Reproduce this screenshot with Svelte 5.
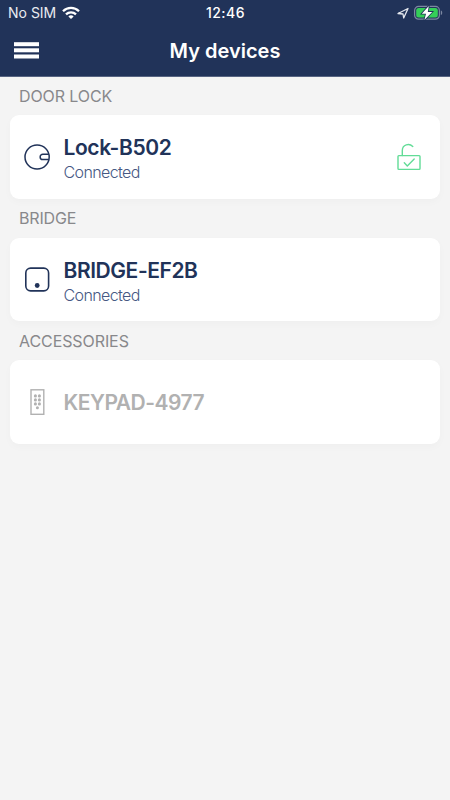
<script>
  const sections = [
    { label: 'DOOR LOCK', labelSpacing: -0.1, name: 'Lock-B502', nameSpacing: -0.4, status: 'Connected', icon: 'lock', unlocked: true },
    { label: 'BRIDGE', labelSpacing: -0.15, name: 'BRIDGE-EF2B', nameSpacing: -0.43, status: 'Connected', icon: 'bridge' },
    { label: 'ACCESSORIES', labelSpacing: -0.08, name: 'KEYPAD-4977', nameSpacing: -0.5, icon: 'keypad', disabled: true }
  ];
  const keys = [0, 1, 2].flatMap((row) => [0, 1].map((col) => [col, row]));
</script>

<div class="screen">
  <header>
    <div class="status-bar">
      <div class="carrier">
        <span>No SIM</span>
        <svg width="18" height="14" viewBox="0 0 18 14" fill="none" stroke="#fff" stroke-width="2.3">
          <path d="M1 5.2C5.5.8 12.5.8 17 5.2" />
          <path d="M4 8.3C6.8 5.6 11.2 5.6 14 8.3" />
          <path d="M6.4 10.4C7.8 9 10.2 9 11.6 10.4L9 13Z" fill="#fff" stroke="none" />
        </svg>
      </div>
      <time>12:46</time>
      <div class="power">
        <svg class="location" width="12" height="12" viewBox="0 0 12 12" fill="none" stroke="#e4e7ee" stroke-width="1.3" stroke-linejoin="round">
          <path d="M1 6.5L11 1.5L6.7 11L6 7Z" />
        </svg>
        <svg width="29" height="16" viewBox="0 0 29 16">
          <rect x=".6" y="1.4" width="24.8" height="12.8" rx="4" fill="none" stroke="#7d88a1" stroke-width="1.2" />
          <path d="M26.8 5.5C28.7 6.1 28.7 9.4 26.8 10Z" fill="#7d88a1" />
          <rect x="2.2" y="3" width="21.6" height="9.6" rx="2.5" fill="#34cf58" />
          <path d="M14.8.9L7.8 8.8H12L10.4 15L18.2 6.9H13.8Z" fill="#fff" stroke="#213359" stroke-width="1.6" paint-order="stroke" />
        </svg>
      </div>
    </div>
    <div class="nav">
      <button class="menu" aria-label="Menu">
        <svg width="25" height="17" viewBox="0 0 25 17" fill="#fff">
          <rect y=".2" width="25" height="4" />
          <rect y="6.3" width="25" height="4" />
          <rect y="12.5" width="25" height="4" />
        </svg>
      </button>
      <h1>My devices</h1>
    </div>
  </header>

  <main>
    {#each sections as s}
      <section>
        <h2><span style:letter-spacing="{s.labelSpacing}px">{s.label}</span></h2>
        <div class="card" class:disabled={s.disabled}>
          <svg class="device" width="28" height="28" viewBox="0 0 28 28" fill="none" stroke="currentColor" stroke-width="1.5">
            {#if s.icon === 'lock'}
              <circle cx="14.1" cy="14" r="12.1" />
              <path d="M25.8 11.3H19.8A2.6 2.6 0 0 0 19.8 16.6H25.8" />
            {:else if s.icon === 'bridge'}
              <rect x="2.8" y="2.1" width="22.8" height="22.8" rx="4.8" stroke-width="1.6" />
              <circle cx="14.2" cy="19.5" r="2.4" fill="currentColor" stroke="none" />
            {:else}
              <rect x="8" y="1.8" width="12.8" height="24.5" stroke-width="1.4" />
              {#each keys as [col, row]}
                <circle cx={12.4 + col * 4} cy={7.9 + row * 4} r="1.55" fill="currentColor" stroke="none" />
              {/each}
              <circle cx="14.4" cy="19.8" r="1.5" fill="currentColor" stroke="none" />
            {/if}
          </svg>
          <div class="info">
            <strong style:letter-spacing="{s.nameSpacing}px">{s.name}</strong>
            {#if s.status}<span>{s.status}</span>{/if}
          </div>
          {#if s.unlocked}
            <svg class="unlocked" width="26" height="28" viewBox="0 0 26 28" fill="none" stroke="#62dc97" stroke-width="1.4" stroke-linecap="round" stroke-linejoin="round">
              <rect x="2" y="12.6" width="22" height="13.8" rx=".8" />
              <path d="M6.3 12.5V7.8C6.3 1.2 13.3.2 16.8 3.4" />
              <path d="M8.3 19.8L11.3 22.9L18.2 16" />
            </svg>
          {/if}
        </div>
      </section>
    {/each}
  </main>
</div>

<style>
  :global(body) { background: #f4f4f4; }
  .screen {
    width: 450px;
    height: 800px;
    overflow: hidden;
    background: #f4f4f4;
    font-family: Inter, "Liberation Sans", sans-serif;
  }
  header {
    box-sizing: border-box;
    height: 77px;
    background: #213359;
    border-bottom: 1px solid #576482;
    color: #fff;
  }
  .status-bar {
    display: grid;
    grid-template-columns: 1fr auto 1fr;
    align-items: center;
    height: 24px;
    padding: 0 7px 0 8px;
    font-size: 14px;
    line-height: 25px;
  }
  .carrier { display: flex; align-items: center; gap: 6px; color: #e9ebf1; }
  time { font-weight: 500; letter-spacing: .5px; }
  .power { display: flex; align-items: center; justify-content: flex-end; gap: 5px; }
  .nav {
    display: grid;
    grid-template-columns: 1fr auto 1fr;
    align-items: center;
    height: 52px;
    padding: 0 14px;
  }
  .menu {
    display: flex;
    width: 25px;
    padding: 1px 0 0;
    border: 0;
    background: none;
  }
  h1 { margin: 0; padding-top: 2px; font-size: 20px; font-weight: 600; line-height: 50px; }
  section { height: 122.4px; padding: 0 10px; }
  h2 {
    margin: 0;
    height: 38.4px;
    padding-left: 9px;
    font-size: 16px;
    font-weight: 400;
    line-height: 38px;
    color: #88888b;
  }
  .card {
    box-sizing: border-box;
    display: flex;
    align-items: center;
    height: 83.5px;
    padding: 0 18px 0 13px;
    border-radius: 9px;
    background: #fff;
    box-shadow: 0 3px 8px rgba(0, 0, 0, .025);
    color: #213359;
  }
  .device { flex: none; }
  .info { flex: 1; display: flex; flex-direction: column; padding: 5px 0 0 12.5px; }
  .info strong { font-size: 21px; font-weight: 600; line-height: 26px; white-space: nowrap; }
  .info span { font-size: 16px; font-weight: 300; line-height: 23px; letter-spacing: -.6px; color: #465883; }
  .disabled { color: #b1b1b1; }
  .disabled .info { padding-top: 2px; }
</style>
